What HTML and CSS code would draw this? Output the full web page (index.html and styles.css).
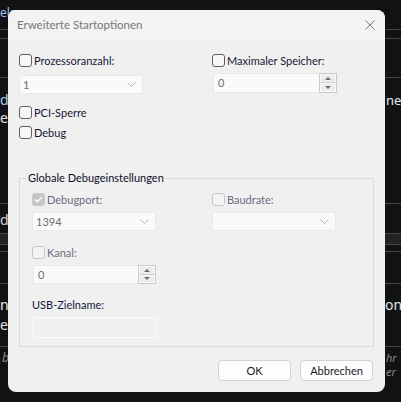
FILE: index.html
```html
<!DOCTYPE html>
<html lang="de">
<head>
<meta charset="utf-8">
<title>Erweiterte Startoptionen</title>
<link rel="stylesheet" href="styles.css">
</head>
<body>
<div class="backdrop" aria-hidden="true">
  <span class="bg-t bg-help">elp</span>
  <span class="bg-t bg-de">de</span>
  <span class="bg-t bg-e1">e</span>
  <span class="bg-t bg-d">d</span>
  <span class="bg-t bg-n">n</span>
  <span class="bg-t bg-e2">e</span>
  <span class="bg-t bg-b">b</span>
  <span class="bg-t bg-ne">ne</span>
  <span class="bg-t bg-onc">on</span>
  <span class="bg-t bg-hr">hr</span>
  <span class="bg-t bg-er">er</span>
</div>

<div class="dialog">
  <div class="titlebar">
    <span class="title">Erweiterte Startoptionen</span>
    <svg class="close" width="10" height="10" viewBox="0 0 10 10"><path d="M0.5 0.5 L9.5 9.5 M9.5 0.5 L0.5 9.5" stroke="#7c7c7c" stroke-width="1" fill="none"/></svg>
  </div>

  <div class="content">
    <div class="cols">
      <div class="col">
        <div class="check"><span class="box"></span><span class="lbl">Prozessoranzahl:</span></div>
        <div class="combo"><span class="val">1</span><svg class="chev" width="9" height="5" viewBox="0 0 9 5"><path d="M0.5 0.5 L4.5 4.5 L8.5 0.5" stroke="#b4b4b4" fill="none"/></svg></div>
      </div>
      <div class="col">
        <div class="check"><span class="box"></span><span class="lbl">Maximaler Speicher:</span></div>
        <div class="spin"><span class="val">0</span><div class="spin-btns"><span class="sb up"></span><span class="sb down"></span></div></div>
      </div>
    </div>

    <div class="check pci"><span class="box"></span><span class="lbl">PCI-Sperre</span></div>
    <div class="check debug"><span class="box"></span><span class="lbl">Debug</span></div>

    <fieldset class="group">
      <legend>Globale Debugeinstellungen</legend>
      <div class="gcols">
        <div class="col">
          <div class="check dis"><span class="box checked"><svg width="9" height="7" viewBox="0 0 9 7"><path d="M1 3.5 L3.4 5.8 L8 1" stroke="#ffffff" stroke-width="1.3" fill="none"/></svg></span><span class="lbl">Debugport:</span></div>
          <div class="combo"><span class="val">1394</span><svg class="chev" width="9" height="5" viewBox="0 0 9 5"><path d="M0.5 0.5 L4.5 4.5 L8.5 0.5" stroke="#b4b4b4" fill="none"/></svg></div>
        </div>
        <div class="col">
          <div class="check dis"><span class="box"></span><span class="lbl">Baudrate:</span></div>
          <div class="combo"><span class="val"></span><svg class="chev" width="9" height="5" viewBox="0 0 9 5"><path d="M0.5 0.5 L4.5 4.5 L8.5 0.5" stroke="#b4b4b4" fill="none"/></svg></div>
        </div>
      </div>
      <div class="check dis kanal"><span class="box"></span><span class="lbl">Kanal:</span></div>
      <div class="spin narrow"><span class="val">0</span><div class="spin-btns"><span class="sb up"></span><span class="sb down"></span></div></div>
      <div class="usb-label">USB-Zielname:</div>
      <div class="textbox"></div>
    </fieldset>

    <div class="buttons">
      <button class="btn">OK</button>
      <button class="btn">Abbrechen</button>
    </div>
  </div>
</div>
</body>
</html>
```

FILE: styles.css
```css
* { box-sizing: border-box; }

html, body {
  margin: 0;
  padding: 0;
  width: 401px;
  height: 402px;
  overflow: hidden;
}

body {
  background: #111213;
  font-family: Lato, "Noto Sans", sans-serif;
  font-size: 11px;
  position: relative;
}

.backdrop {
  position: absolute;
  inset: 0;
  background:
    linear-gradient(#4a453e, #4a453e) 0 29px / 100% 1px no-repeat,
    linear-gradient(#4a453e, #4a453e) 0 38px / 100% 1px no-repeat,
    linear-gradient(#4a453e, #4a453e) 0 77px / 100% 1px no-repeat,
    linear-gradient(#4a453e, #4a453e) 0 203px / 100% 1px no-repeat,
    linear-gradient(#4a453e, #4a453e) 0 233px / 100% 1px no-repeat,
    linear-gradient(#222325, #222325) 0 234px / 100% 10px no-repeat,
    linear-gradient(#4a453e, #4a453e) 0 244px / 100% 1px no-repeat,
    linear-gradient(#4a453e, #4a453e) 0 251px / 100% 1px no-repeat,
    linear-gradient(#4a453e, #4a453e) 0 283px / 100% 1px no-repeat,
    linear-gradient(#4a453e, #4a453e) 0 346px / 100% 1px no-repeat,
    #111213;
}

.bg-t {
  position: absolute;
  font-family: "Noto Sans", sans-serif;
  font-size: 14px;
  line-height: 16px;
  color: #e6e6e6;
  white-space: nowrap;
}
.bg-help { left: 0; top: 6px; color: #9fc3ea; font-size: 12px; line-height: 14px; }
.bg-de { left: 0; top: 92px; color: #a9c8ee; }
.bg-e1 { left: 0; top: 110px; }
.bg-d { left: 0; top: 212px; color: #d4d4d4; }
.bg-n { left: 0; top: 297px; }
.bg-e2 { left: 0; top: 317px; }
.bg-b { left: 2px; top: 352px; font-style: italic; color: #8a8a8a; font-size: 12px; line-height: 12px; }
.bg-ne { left: 386px; top: 92px; font-size: 13px; }
.bg-onc { left: 385px; top: 297px; }
.bg-hr { left: 386px; top: 352px; font-style: italic; color: #8a8a8a; font-size: 11px; line-height: 11px; }
.bg-er { left: 386px; top: 366px; font-style: italic; color: #8a8a8a; font-size: 11px; line-height: 11px; }

.dialog {
  position: relative;
  z-index: 1;
  margin: 10px 0 0 8px;
  width: 377px;
  height: 382px;
  background: #f0f0f0;
  border-radius: 8px;
  overflow: hidden;
  display: flex;
  flex-direction: column;
}

.titlebar {
  height: 30px;
  background: #f3f3f3;
  display: flex;
  align-items: center;
  justify-content: space-between;
  padding: 0 10px 0 9px;
  flex: none;
}

.title {
  color: #777777;
  font-size: 11.5px;
  line-height: 16px;
}

.close { display: block; margin-top: -1px; }

.content {
  padding: 14px 11px 0 11px;
  display: flex;
  flex-direction: column;
}

.cols {
  display: grid;
  grid-template-columns: 124px 124px;
  column-gap: 69px;
}

.col {
  display: flex;
  flex-direction: column;
}

.check {
  display: flex;
  align-items: center;
  height: 13px;
  gap: 2px;
}

.box {
  width: 13px;
  height: 13px;
  border: 1px solid #5f5f5f;
  border-radius: 3px;
  background: #f7f7f7;
  flex: none;
  display: flex;
  align-items: center;
  justify-content: center;
}

.lbl {
  color: #16163a;
  font-size: 11px;
  line-height: 16px;
  white-space: nowrap;
}

.dis .box {
  border-color: #c6c6c6;
  background: #f3f3f3;
}
.dis .box.checked {
  background: #c6c6c6;
  border-color: #c6c6c6;
}
.dis .lbl { color: #6c6c80; }

.combo {
  margin-top: 8px;
  height: 19px;
  width: 124px;
  background: #fafafa;
  border: 1px solid #e9e9e9;
  border-radius: 2px;
  display: flex;
  align-items: center;
  justify-content: space-between;
  padding: 0 6px 0 3px;
}

.val {
  color: #6d6d6d;
  font-size: 11px;
  line-height: 16px;
}

.chev { display: block; }

.spin {
  margin-top: 6px;
  margin-left: 1px;
  height: 20px;
  width: 124px;
  display: flex;
  background: #fafafa;
  border: 1px solid #e9e9e9;
  border-right: none;
}
.spin .val {
  flex: 1;
  padding-left: 4px;
  display: flex;
  align-items: center;
}

.spin-btns {
  width: 18px;
  display: flex;
  flex-direction: column;
  border: 1px solid #cacaca;
  margin: -1px 0;
  background: #f0f0f0;
}
.sb {
  flex: 1;
  display: flex;
  align-items: center;
  justify-content: center;
  background: #ececec;
  border: 1px solid #f8f8f8;
}
.sb.up { border-bottom: 1px solid #cfcfcf; }
.sb.up::before {
  content: "";
  border-left: 3px solid transparent;
  border-right: 3px solid transparent;
  border-bottom: 3px solid #6a6a6a;
}
.sb.down::before {
  content: "";
  border-left: 3px solid transparent;
  border-right: 3px solid transparent;
  border-top: 3px solid #6a6a6a;
}

.pci { margin-top: 12px; }
.debug { margin-top: 7px; }

.group {
  margin: 31px 0 0 0;
  border: 1px solid #dadada;
  padding: 7px 12px 8px 12px;
  min-width: 0;
  width: 355px;
}
.group legend {
  padding: 0 2px;
  margin-left: -6px;
  color: #0c0c28;
  font-size: 11px;
  line-height: 16px;
}

.gcols {
  display: grid;
  grid-template-columns: 124px 124px;
  column-gap: 56px;
}
.gcols .combo { margin-top: 6px; }

.kanal { margin-top: 15px; }
.spin.narrow { margin-top: 6px; margin-left: 1px; width: 123px; height: 19px; }

.usb-label {
  margin-top: 13px;
  color: #16163a;
  font-size: 11px;
  line-height: 16px;
}

.textbox {
  margin-top: 4px;
  margin-left: 1px;
  width: 123px;
  height: 21px;
  border: 1px solid #fbfbfb;
  background: #f0f0f0;
}

.buttons {
  margin-top: 13px;
  display: flex;
  justify-content: flex-end;
  gap: 9px;
  padding-right: 1px;
}

.btn {
  width: 73px;
  height: 21px;
  background: #fdfdfd;
  border: 1px solid #d2d2d2;
  border-radius: 4px;
  font-family: Lato, "Noto Sans", sans-serif;
  font-size: 11px;
  color: #1a1a1a;
  padding: 0;
  line-height: 16px;
}
```
